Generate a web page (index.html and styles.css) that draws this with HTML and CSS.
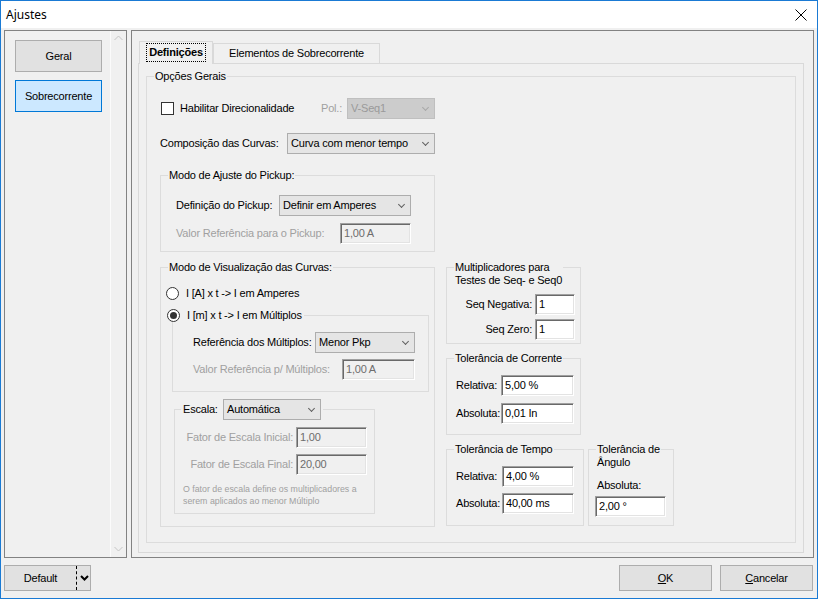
FILE: index.html
```html
<!DOCTYPE html>
<html lang="pt">
<head>
<meta charset="utf-8">
<title>Ajustes</title>
<link rel="stylesheet" href="styles.css">
</head>
<body>
<div class="win">
  <div class="titlebar">
    <span class="title">Ajustes</span>
    <svg class="close" width="12" height="12" viewBox="0 0 12 12"><path d="M0.5 0.5 L11.5 11.5 M11.5 0.5 L0.5 11.5" stroke="#000" stroke-width="1" fill="none"/></svg>
  </div>
  <div class="body">
    <div class="main">
      <div class="nav">
        <div class="nav-list">
          <div class="navbtn">Geral</div>
          <div class="navbtn sel">Sobrecorrente</div>
        </div>
        <div class="vscroll">
          <svg width="9" height="6" viewBox="0 0 9 6"><path d="M0.5 5 L4.5 1 L8.5 5" stroke="#c4c4c4" fill="none"/></svg>
          <svg width="9" height="6" viewBox="0 0 9 6"><path d="M0.5 1 L4.5 5 L8.5 1" stroke="#c4c4c4" fill="none"/></svg>
        </div>
      </div>
      <div class="content">
        <div class="tabs">
          <div class="tabstrip">
            <div class="tab active"><span class="focus">Definições</span></div>
            <div class="tab">Elementos de Sobrecorrente</div>
          </div>
          <div class="tabpage">
            <div class="grp g-opcoes">
              <div class="gt">Opções Gerais</div>
              <div class="row r-dir">
                <div class="chkwrap"><span class="chk"></span><span class="lbl">Habilitar Direcionalidade</span></div>
                <span class="lbl dis w-pol">Pol.:</span>
                <div class="combo disabled w88"><span>V-Seq1</span><i class="chev"></i></div>
              </div>
              <div class="row r-comp">
                <span class="lbl w-comp">Composição das Curvas:</span>
                <div class="combo w148"><span>Curva com menor tempo</span><i class="chev"></i></div>
              </div>
              <div class="grp g-pickup">
                <div class="gt">Modo de Ajuste do Pickup:</div>
                <div class="row r-pk1">
                  <span class="lbl w-defpk">Definição do Pickup:</span>
                  <div class="combo w132"><span>Definir em Amperes</span><i class="chev"></i></div>
                </div>
                <div class="row r-pk2">
                  <span class="lbl dis w-valpk">Valor Referência para o Pickup:</span>
                  <div class="tb disabled w71">1,00 A</div>
                </div>
              </div>
              <div class="cols">
                <div class="col-left">
                  <div class="grp g-vis">
                    <div class="gt">Modo de Visualização das Curvas:</div>
                    <div class="radio-row r-rad1"><span class="rad"></span><span class="lbl">I [A] x t -&gt; I em Amperes</span></div>
                    <div class="grp g-mult">
                      <div class="gt gt-radio"><span class="rad on"></span><span class="lbl">I [m] x t -&gt; I em Múltiplos</span></div>
                      <div class="row r-m1">
                        <span class="lbl w-refm">Referência dos Múltiplos:</span>
                        <div class="combo w100"><span>Menor Pkp</span><i class="chev"></i></div>
                      </div>
                      <div class="row r-m2">
                        <span class="lbl dis w-valm">Valor Referência p/ Múltiplos:</span>
                        <div class="tb disabled w73">1,00 A</div>
                      </div>
                    </div>
                    <div class="grp g-esc">
                      <div class="gt gt-esc"><span class="lbl w-esc">Escala:</span><div class="combo w98"><span>Automática</span><i class="chev"></i></div></div>
                      <div class="row r-e1">
                        <span class="lbl dis rlbl w-fator">Fator de Escala Inicial:</span>
                        <div class="tb disabled w71">1,00</div>
                      </div>
                      <div class="row r-e2">
                        <span class="lbl dis rlbl w-fator">Fator de Escala Final:</span>
                        <div class="tb disabled w71">20,00</div>
                      </div>
                      <p class="note">O fator de escala define os multiplicadores a<br>serem aplicados ao menor Múltiplo</p>
                    </div>
                  </div>
                </div>
                <div class="col-right">
                  <div class="grp g-seq">
                    <div class="gt">Multiplicadores para<br>Testes de Seq- e Seq0</div>
                    <div class="row r-s1">
                      <span class="lbl rlbl w-seq">Seq Negativa:</span>
                      <div class="tb w40">1</div>
                    </div>
                    <div class="row r-s2">
                      <span class="lbl rlbl w-seq">Seq Zero:</span>
                      <div class="tb w40">1</div>
                    </div>
                  </div>
                  <div class="grp g-cor">
                    <div class="gt">Tolerância de Corrente</div>
                    <div class="row r-c1">
                      <span class="lbl w-rel">Relativa:</span>
                      <div class="tb w73">5,00 %</div>
                    </div>
                    <div class="row r-c2">
                      <span class="lbl w-rel">Absoluta:</span>
                      <div class="tb w73">0,01 In</div>
                    </div>
                  </div>
                  <div class="bottom-pair">
                    <div class="grp g-tempo">
                      <div class="gt">Tolerância de Tempo</div>
                      <div class="row r-t1">
                        <span class="lbl w-rel2">Relativa:</span>
                        <div class="tb w72">4,00 %</div>
                      </div>
                      <div class="row r-t2">
                        <span class="lbl w-rel2">Absoluta:</span>
                        <div class="tb w72">40,00 ms</div>
                      </div>
                    </div>
                    <div class="grp g-ang">
                      <div class="gt">Tolerância de<br>Ângulo</div>
                      <div class="lbl a-lbl">Absoluta:</div>
                      <div class="tb w71 a-tb">2,00 °</div>
                    </div>
                  </div>
                </div>
              </div>
            </div>
          </div>
        </div>
      </div>
    </div>
    <div class="footer">
      <div class="btn split"><span class="split-main">Default</span><span class="split-sep"></span><svg class="split-arrow" width="9" height="6" viewBox="0 0 9 6"><path d="M1 1 L4.5 4.5 L8 1" stroke="#000" stroke-width="2" fill="none"/></svg></div>
      <div class="spacer"></div>
      <div class="btn w93"><span><u>O</u>K</span></div>
      <div class="btn w93"><span><u>C</u>ancelar</span></div>
    </div>
  </div>
</div>
</body>
</html>
```
FILE: styles.css
```css
* { box-sizing: border-box; }
html, body { margin: 0; padding: 0; }
body {
  width: 818px; height: 599px; overflow: hidden;
  font-family: "Liberation Sans", Arial, sans-serif;
  font-size: 11px; line-height: 13px; color: #000;
  letter-spacing: -0.2px;
}
.win {
  width: 818px; height: 599px;
  border: 1px solid #1a7ad4;
  display: flex; flex-direction: column;
  background: #f0f0f0;
}
.titlebar {
  height: 27px; background: #fff;
  display: flex; align-items: center; justify-content: space-between;
  padding-left: 5px; padding-right: 10px;
}
.title { font-family: "Noto Sans", "Open Sans", sans-serif; font-size: 12px; line-height: 16px; letter-spacing: 0; }
.close { display: block; }
.body {
  flex: 1; background: #f0f0f0;
  padding: 2px 3px 0 3px;
  display: flex; flex-direction: column;
}
.main { display: flex; gap: 4px; height: 528px; }
.nav {
  width: 123px; height: 528px;
  border: 1px solid #828282;
  display: flex;
}
.nav-list { flex: 1; padding: 9px 0 0 10px; display: flex; flex-direction: column; gap: 8px; }
.navbtn {
  width: 87px; height: 32px;
  background: #e1e1e1; border: 1px solid #adadad;
  display: flex; align-items: center; justify-content: center;
}
.navbtn.sel { background: #cce8ff; border-color: #0078d7; }
.vscroll {
  width: 16px; border-left: 1px solid #fbfbfb;
  display: flex; flex-direction: column; justify-content: space-between; align-items: center;
  padding: 4px 0 5px 0;
}
.vscroll svg { display: block; }
.content {
  width: 683px; height: 528px;
  border: 1px solid #828282;
  padding: 10px 0 0 6px;
}
.tabs { width: 666px; }
.tabstrip { display: flex; align-items: flex-end; height: 22px; padding-left: 1px; }
.tab {
  height: 20px; border: 1px solid #d9d9d9; border-bottom: none;
  background: #f0f0f0;
  display: flex; align-items: center; justify-content: center;
  width: 167px; padding-bottom: 1px;
}
.tab.active {
  width: 74px; height: 23px; margin-bottom: -1px; position: relative; z-index: 1;
  font-weight: bold; border-color: #d9d9d9; background: #f0f0f0;
  padding-bottom: 2px;
}
.focus { border: 1px dotted #000; padding: 2px 2px 2px 2px; line-height: 13px; }
.tabpage {
  width: 666px; height: 490px;
  border: 1px solid #d9d9d9;
  padding: 12px 0 0 7px;
}
.grp { border: 1px solid #dcdcdc; }
.gt {
  width: fit-content; margin-top: -7px; margin-left: 7px;
  padding: 0 1px; background: #f0f0f0; line-height: 13px;
}
.g-opcoes { width: 650px; height: 467px; }
.row { display: flex; align-items: center; }
.lbl { white-space: nowrap; }
.dis { color: #a0a0a0; }
.rlbl { text-align: right; padding-right: 3px; }

.r-dir { margin-top: 15px; margin-left: 14px; }
.chkwrap { width: 160px; display: flex; align-items: center; }
.chk { width: 13px; height: 13px; border: 1px solid #333; background: #fff; margin-right: 6px; }
.w-pol { width: 26px; }
.r-comp { margin-top: 14px; margin-left: 13px; }
.w-comp { width: 127px; }

.combo {
  height: 21px; border: 1px solid #adadad; background: #e5e5e5;
  display: flex; align-items: center; justify-content: space-between;
  padding: 0 6px 0 3px; white-space: nowrap;
}
.combo.disabled { background: #cccccc; border-color: #bfbfbf; color: #9a9a9a; }
.chev {
  width: 5px; height: 5px; border-right: 1px solid #606060; border-bottom: 1px solid #606060;
  transform: rotate(45deg); margin-top: -3px;
}
.combo.disabled .chev { border-color: #a8a8a8; }
.w88 { width: 88px; } .w148 { width: 148px; } .w132 { width: 132px; } .w100 { width: 100px; } .w98 { width: 98px; }
.tb {
  height: 21px; background: #fff;
  border-top: 1px solid #a0a0a0; border-left: 1px solid #a0a0a0;
  border-right: 1px solid #fff; border-bottom: 1px solid #fff;
  box-shadow: inset 1px 1px 0 #696969, inset -1px -1px 0 #e3e3e3;
  padding: 0 0 0 3px; display: flex; align-items: center; white-space: nowrap;
}
.tb.disabled { background: #f0f0f0; color: #6d6d6d; }
.w71 { width: 71px; } .w73 { width: 73px; } .w72 { width: 72px; } .w40 { width: 40px; }

.g-pickup { width: 275px; height: 77px; margin-top: 21px; margin-left: 13px; }
.g-pickup .gt { margin-left: 7px; }
.r-pk1 { margin-top: 13px; margin-left: 15px; }
.w-defpk { width: 103px; }
.r-pk2 { margin-top: 7px; margin-left: 15px; }
.w-valpk { width: 164px; }

.cols { display: flex; margin-top: 15px; margin-left: 13px; gap: 11px; }
.col-left { width: 275px; }
.g-vis { width: 275px; height: 260px; }
.radio-row { display: flex; align-items: center; }
.rad {
  width: 13px; height: 13px; border: 1px solid #333; border-radius: 50%; background: #fff;
  display: flex; align-items: center; justify-content: center; margin-right: 7px; flex: none;
}
.rad.on::after { content: ""; width: 7px; height: 7px; border-radius: 50%; background: #333; }
.r-rad1 { margin-top: 13px; margin-left: 5px; }
.g-mult { width: 257px; height: 77px; margin-top: 15px; margin-left: 11px; }
.gt-radio { display: flex; align-items: center; margin-left: -6px; padding: 0 2px 0 0; }
.r-m1 { margin-top: 10px; margin-left: 20px; }
.w-refm { width: 122px; }
.r-m2 { margin-top: 6px; margin-left: 20px; }
.w-valm { width: 149px; }
.g-esc { width: 201px; height: 105px; margin-top: 17px; margin-left: 13px; }
.gt-esc { display: flex; align-items: center; margin-top: -11px; margin-left: 6px; padding: 0 2px; }
.w-esc { width: 40px; }
.r-e1 { margin-top: 7px; }
.r-e2 { margin-top: 6px; }
.w-fator { width: 121px; }
.note { margin: 8px 0 0 8px; font-size: 8.8px; line-height: 12px; color: #a0a0a0; white-space: nowrap; letter-spacing: 0; }

.col-right { width: 228px; }
.g-seq { width: 135px; height: 77px; }
.r-s1 { margin-top: 7px; }
.r-s2 { margin-top: 4px; }
.w-seq { width: 88px; }
.g-cor { width: 135px; height: 77px; margin-top: 14px; }
.r-c1 { margin-top: 10px; margin-left: 9px; }
.r-c2 { margin-top: 7px; margin-left: 9px; }
.w-rel { width: 45px; }
.bottom-pair { display: flex; gap: 4px; margin-top: 14px; }
.g-tempo { width: 138px; height: 77px; }
.r-t1 { margin-top: 10px; margin-left: 9px; }
.r-t2 { margin-top: 6px; margin-left: 9px; }
.w-rel2 { width: 46px; }
.g-ang { width: 86px; height: 77px; }
.a-lbl { margin-top: 10px; margin-left: 8px; }
.a-tb { margin-top: 4px; margin-left: 6px; }

.footer { display: flex; margin-top: 7px; padding-right: 1px; }
.spacer { flex: 1; }
.btn {
  height: 26px; background: #e1e1e1; border: 1px solid #adadad;
  display: flex; align-items: center; justify-content: center;
}
.w93 { width: 93px; margin-left: 8px; }
.split { width: 87px; justify-content: flex-start; }
.split-main { width: 71px; text-align: center; }
.split-sep { width: 0; height: 24px; border-left: 1px dashed #000; }
.split-arrow { margin-left: 3px; display: block; }
```
